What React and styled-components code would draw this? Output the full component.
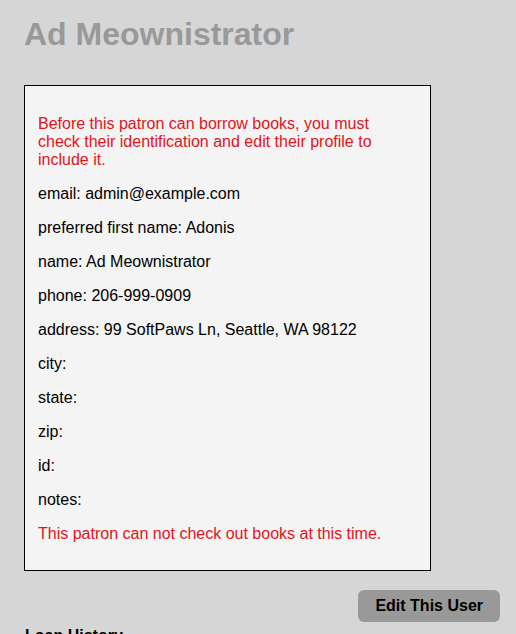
import React from "react";
import styled, { createGlobalStyle } from "styled-components";

const GlobalStyle = createGlobalStyle`
  html, body {
    margin: 0;
    padding: 0;
    background: #d6d6d6;
  }
  body {
    font-family: "Liberation Sans", Arial, Helvetica, sans-serif;
    color: #000;
    overflow: hidden;
  }
`;

const Page = styled.div`
  padding: 16px 16px 0 24px;
`;

const Title = styled.h1`
  margin: 0 0 32px;
  color: #999;
  font-size: 32px;
  font-weight: bold;
  line-height: 37px;
`;

const Card = styled.div`
  width: 360px;
  border: 1px solid #000;
  background: #f4f4f4;
  padding: 13px 32px 11px 13px;
`;

const Line = styled.p`
  margin: 16px 0;
  font-size: 16px;
  line-height: 18px;
  color: ${(p) => (p.$warn ? "#e0141c" : "#000")};
`;

const Actions = styled.div`
  display: flex;
  justify-content: flex-end;
  margin-top: 19px;
`;

const Button = styled.button`
  background: #999;
  border: none;
  border-radius: 6px;
  padding: 0 17px;
  height: 32px;
  font-family: inherit;
  font-size: 16px;
  font-weight: bold;
  color: #000;
`;

const Section = styled.h3`
  margin: 5px 0 0 1px;
  font-size: 16px;
  font-weight: bold;
  line-height: 18px;
`;

const fields = [
  ["email", "admin@example.com"],
  ["preferred first name", "Adonis"],
  ["name", "Ad Meownistrator"],
  ["phone", "206-999-0909"],
  ["address", "99 SoftPaws Ln, Seattle, WA 98122"],
  ["city", ""],
  ["state", ""],
  ["zip", ""],
  ["id", ""],
  ["notes", ""],
];

export default function App() {
  return (
    <>
      <GlobalStyle />
      <Page>
        <Title>Ad Meownistrator</Title>
        <Card>
          <Line $warn>
            Before this patron can borrow books, you must check their
            identification and edit their profile to include it.
          </Line>
          {fields.map(([label, value]) => (
            <Line key={label}>
              {label}: {value}
            </Line>
          ))}
          <Line $warn>This patron can not check out books at this time.</Line>
        </Card>
        <Actions>
          <Button>Edit This User</Button>
        </Actions>
        <Section>Loan History</Section>
      </Page>
    </>
  );
}
